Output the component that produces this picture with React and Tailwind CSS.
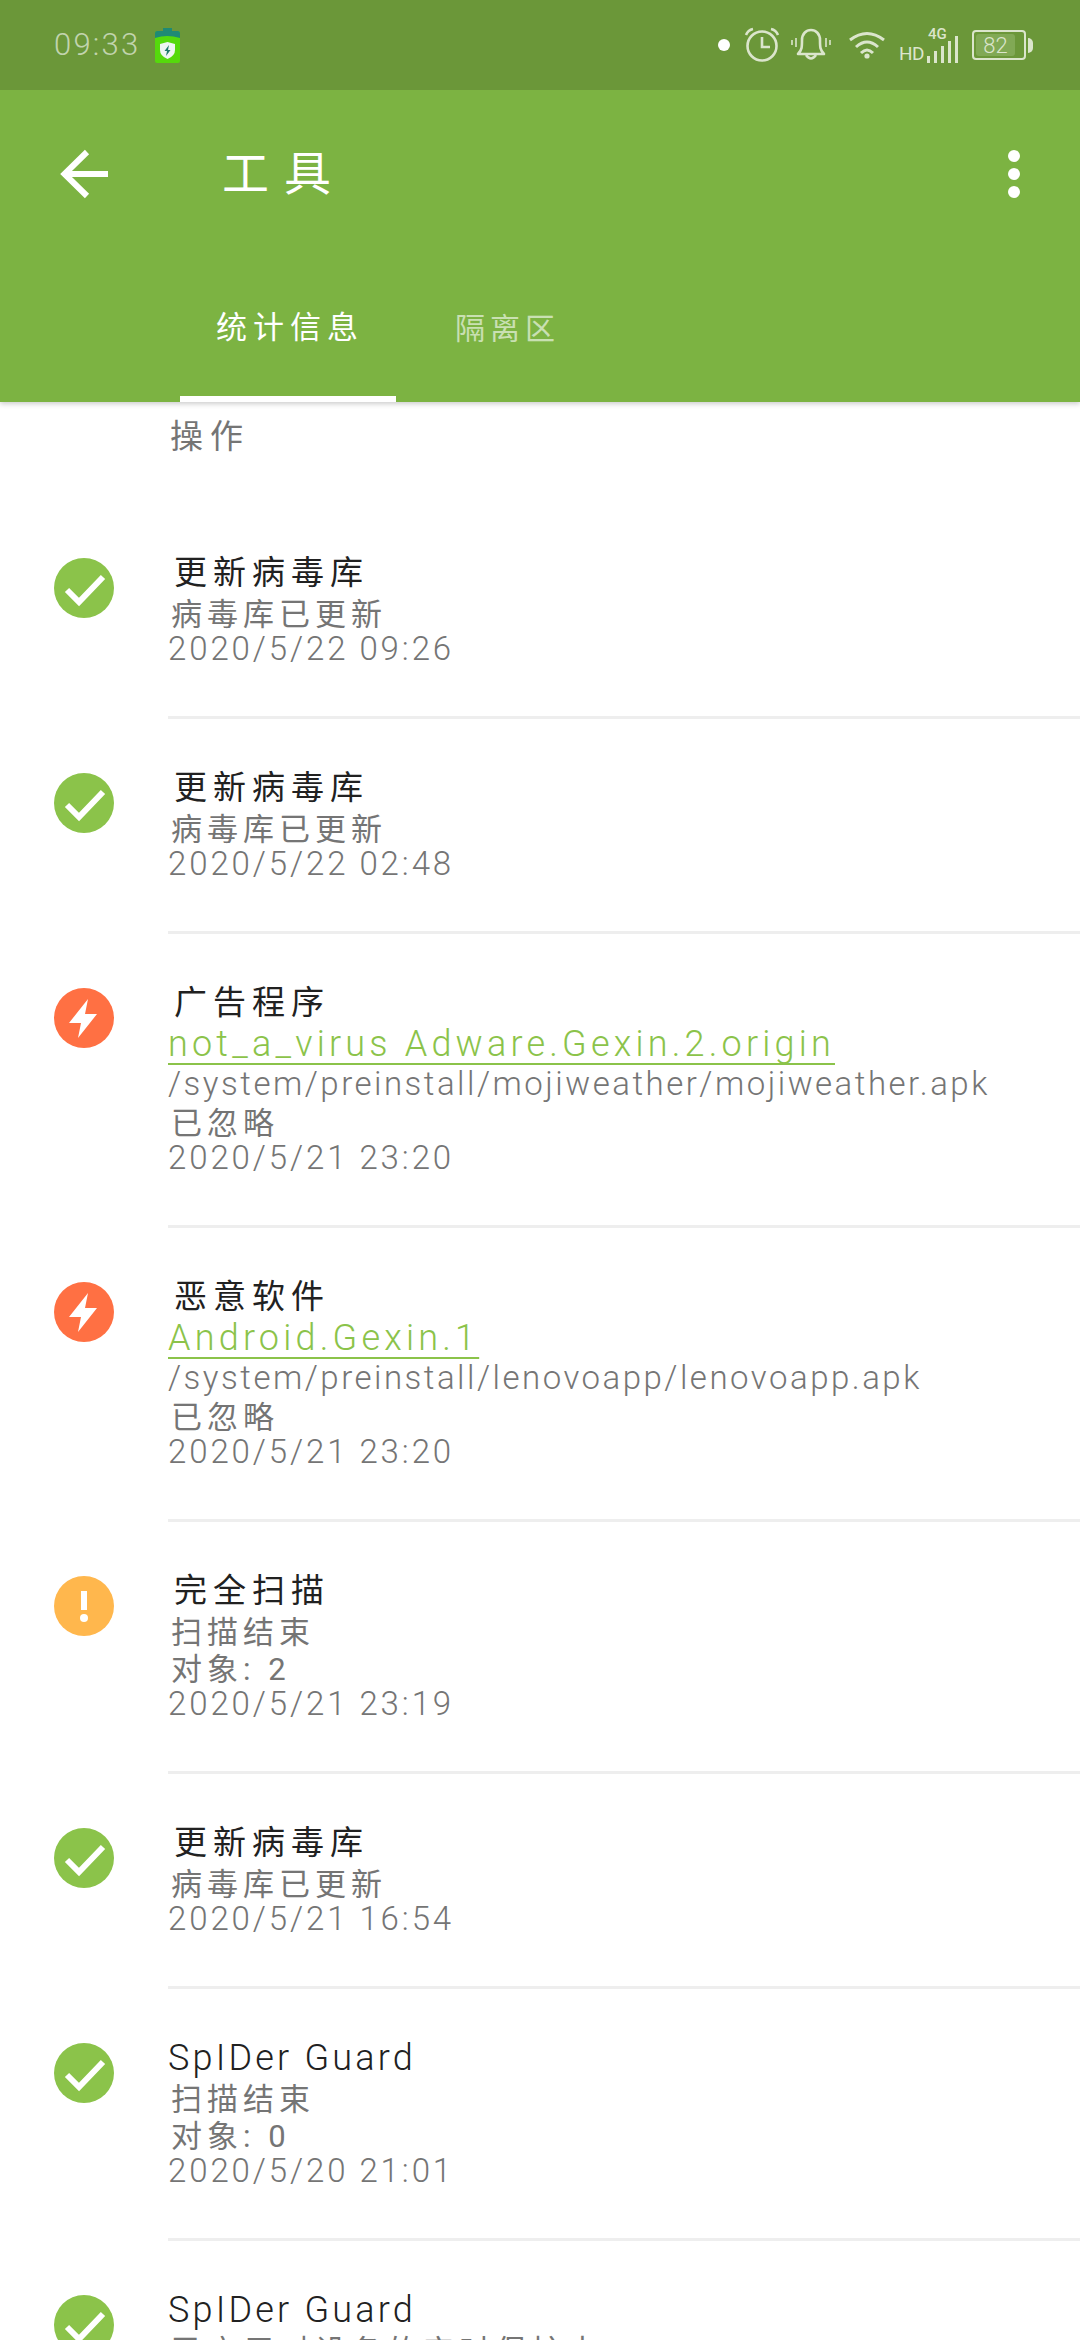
import React from "react";

const F = "font-['Roboto','Noto_Sans_CJK_SC',sans-serif]";

function Check() {
  return (
    <svg width="60" height="60" viewBox="0 0 60 60" className="block">
      <circle cx="30" cy="30" r="30" fill="#8bc34a" />
      <path d="M13 32 L25 44 L49 19" fill="none" stroke="#fff" strokeWidth="6" />
    </svg>
  );
}
function Bolt() {
  return (
    <svg width="60" height="60" viewBox="0 0 60 60" className="block">
      <circle cx="30" cy="30" r="30" fill="#ff7043" />
      <path d="M34 11 L15 35 H27 L24 50 L43 26 H31 Z" fill="#fff" />
    </svg>
  );
}
function Warn() {
  return (
    <svg width="60" height="60" viewBox="0 0 60 60" className="block">
      <circle cx="30" cy="30" r="30" fill="#ffb74d" />
      <rect x="27" y="15" width="6" height="19" fill="#fff" />
      <circle cx="30" cy="42" r="4" fill="#fff" />
    </svg>
  );
}

const cjkSub = "text-[31px] tracking-[5px] pl-[3px] pt-[3px] text-[#757575]";
const date = "text-[33px] font-light tracking-[2.9px] text-[#757575]";
const path = "text-[33px] font-light tracking-[2.5px] text-[#757575]";

function Line({ cls, children }) {
  return <div className={`h-[37px] leading-[37px] whitespace-nowrap ${cls}`}>{children}</div>;
}

function Row({ icon, title, latinTitle, children }) {
  return (
    <div className="flex pl-[54px]">
      <div className="w-[60px] pt-[54px] shrink-0">{icon}</div>
      <div className="ml-[54px] flex-1 min-w-0">
        <div className="pt-[49px] pb-[49px]">
          <div
            className={`h-[40px] leading-[40px] whitespace-nowrap text-[#212121] ${
              latinTitle ? "text-[36px] font-light tracking-[3.2px]" : "text-[33px] tracking-[6px] pl-[6px]"
            }`}
          >
            {title}
          </div>
          {children}
        </div>
        <div className="h-[3px] bg-[#eeeeee]" />
      </div>
    </div>
  );
}

function Link({ children }) {
  return (
    <div className="h-[42px] leading-[42px] whitespace-nowrap text-[36px] font-light tracking-[4.2px] text-[#8bc34a] underline decoration-[2px] underline-offset-[7px] [text-decoration-skip-ink:none]">
      {children}
    </div>
  );
}

function StatusIcons() {
  const c = "#dbe5cc";
  return (
    <div className="flex items-center">
      <div className="w-[12px] h-[12px] rounded-full bg-white" />
      <svg width="36" height="36" viewBox="0 0 36 36" className="ml-[14px]" fill="none" stroke={c} strokeWidth="2.6">
        <circle cx="18" cy="19" r="14.5" />
        <path d="M18 10 V20 H26" />
        <path d="M2 8 Q4 3 9 2 M34 8 Q32 3 27 2" />
      </svg>
      <svg width="40" height="36" viewBox="0 0 40 36" className="ml-[11px]" fill="none" stroke={c} strokeWidth="2.6">
        <path d="M7 27 C11 23 11 20 11 13 C11 7 15 3 20 3 C25 3 29 7 29 13 C29 20 29 23 33 27 Z" strokeLinejoin="round" />
        <path d="M15 28 Q20 35 25 28" />
        <path d="M1 13 V18 M5 11 V20 M35 11 V20 M39 13 V18" strokeWidth="1.6" />
      </svg>
      <svg width="38" height="30" viewBox="0 0 38 30" className="ml-[17px]" fill="none" stroke={c} strokeWidth="3">
        <path d="M2 10 Q19 -3 36 10 M8 17 Q19 7 30 17 M13 23 Q19 17 25 23" />
        <circle cx="19" cy="26" r="2.6" fill={c} stroke="none" />
      </svg>
      <div className="relative w-[60px] h-[36px] ml-[13px]">
        <div className={`absolute left-0 bottom-0 text-[19px] leading-[18px] tracking-[-0.5px] text-[#dbe5cc] ${F}`}>HD</div>
        <div className={`absolute left-[29px] top-0 text-[15px] leading-[14px] font-medium text-[#dbe5cc] ${F}`}>4G</div>
        <svg width="32" height="27" viewBox="0 0 32 27" className="absolute left-[28px] bottom-0" fill={c}>
          <rect x="0" y="20" width="3" height="7" />
          <rect x="7" y="15" width="3" height="12" />
          <rect x="14" y="10" width="3" height="17" />
          <rect x="21" y="5" width="3" height="22" />
          <rect x="28" y="0" width="3" height="27" />
        </svg>
      </div>
      <div className="relative w-[54px] h-[30px] ml-[13px] rounded-[4px] border-[2px] border-[#dbe5cc] flex items-center">
        <div className="w-[39px] h-[22px] ml-[2px] rounded-[3px] bg-[#81a955] flex items-center justify-center">
          <span className={`text-[22px] font-light text-[#dbe5cc] ${F}`}>82</span>
        </div>
      </div>
      <div className="w-[5px] h-[15px] ml-[2px] bg-[#dbe5cc] rounded-r-full" />
    </div>
  );
}

export default function App() {
  return (
    <div className={`w-[1080px] h-[2340px] overflow-hidden bg-white ${F}`}>
      <div className="relative z-10 bg-[#7cb342] shadow-[0_2px_5px_rgba(0,0,0,0.2)]">
        <div className="h-[90px] bg-[#6b9739] flex items-center pl-[54px] pr-[47px]">
          <span className="text-[31px] font-light tracking-[2.2px] text-white/60">09:33</span>
          <svg width="25" height="35" viewBox="0 0 25 35" className="ml-[15px]">
            <rect x="8" y="0" width="9" height="4" fill="#1f8a74" />
            <rect x="0" y="3" width="25" height="32" rx="2" fill="#55d90c" />
            <path d="M0 5 Q0 3 2 3 H23 Q25 3 25 5 V10 Q12 6 0 10 Z" fill="#1f8a74" />
            <path d="M12.5 14 L20 16 V22 Q20 28 12.5 31 Q5 28 5 22 V16 Z" fill="#eef6f2" />
            <path d="M14 17 L9.5 23 H12 L11 28 L15.5 22 H13 Z" fill="#1f7a6c" />
          </svg>
          <div className="ml-auto">
            <StatusIcons />
          </div>
        </div>
        <div className="h-[312px] flex flex-col">
          <div className="flex items-center h-[168px] pl-[60px] pr-[60px]">
            <svg width="48" height="50" viewBox="0 0 48 50" fill="none" stroke="#fff" strokeWidth="6">
              <path d="M48 25 H5 M27 3 L4.500 25 L27 47" />
            </svg>
            <span className="ml-[114px] text-[47px] tracking-[15px] text-white">工具</span>
            <div className="ml-auto flex flex-col gap-[6px]">
              <div className="w-[12px] h-[12px] rounded-full bg-white" />
              <div className="w-[12px] h-[12px] rounded-full bg-white" />
              <div className="w-[12px] h-[12px] rounded-full bg-white" />
            </div>
          </div>
          <div className="mt-auto flex pl-[180px]">
            <div className="w-[216px] h-[118px] border-b-[6px] border-white flex items-center justify-center pb-[24px]">
              <span className="text-[31px] tracking-[6px] pl-[4px] text-white">统计信息</span>
            </div>
            <div className="h-[118px] pl-[59px] flex items-center pb-[30px]">
              <span className="text-[30px] tracking-[5px] text-white/60">隔离区</span>
            </div>
          </div>
        </div>
      </div>

      <div className="h-[102px] pl-[170px] pt-[15px]">
        <span className="text-[33px] tracking-[7px] leading-[40px] text-[#757575]">操作</span>
      </div>

      <Row icon={<Check />} title="更新病毒库">
        <Line cls={cjkSub}>病毒库已更新</Line>
        <Line cls={date}>2020/5/22 09:26</Line>
      </Row>
      <Row icon={<Check />} title="更新病毒库">
        <Line cls={cjkSub}>病毒库已更新</Line>
        <Line cls={date}>2020/5/22 02:48</Line>
      </Row>
      <Row icon={<Bolt />} title="广告程序">
        <Link>not_a_virus Adware.Gexin.2.origin</Link>
        <Line cls={path}>/system/preinstall/mojiweather/mojiweather.apk</Line>
        <Line cls={cjkSub}>已忽略</Line>
        <Line cls={date}>2020/5/21 23:20</Line>
      </Row>
      <Row icon={<Bolt />} title="恶意软件">
        <Link>Android.Gexin.1</Link>
        <Line cls={path}>/system/preinstall/lenovoapp/lenovoapp.apk</Line>
        <Line cls={cjkSub}>已忽略</Line>
        <Line cls={date}>2020/5/21 23:20</Line>
      </Row>
      <Row icon={<Warn />} title="完全扫描">
        <Line cls={cjkSub}>扫描结束</Line>
        <Line cls={cjkSub}>对象: 2</Line>
        <Line cls={date}>2020/5/21 23:19</Line>
      </Row>
      <Row icon={<Check />} title="更新病毒库">
        <Line cls={cjkSub}>病毒库已更新</Line>
        <Line cls={date}>2020/5/21 16:54</Line>
      </Row>
      <Row icon={<Check />} title="SpIDer Guard" latinTitle>
        <Line cls={cjkSub}>扫描结束</Line>
        <Line cls={cjkSub}>对象: 0</Line>
        <Line cls={date}>2020/5/20 21:01</Line>
      </Row>
      <Row icon={<Check />} title="SpIDer Guard" latinTitle>
        <Line cls={cjkSub}>已启用对设备的实时保护中</Line>
      </Row>
    </div>
  );
}
